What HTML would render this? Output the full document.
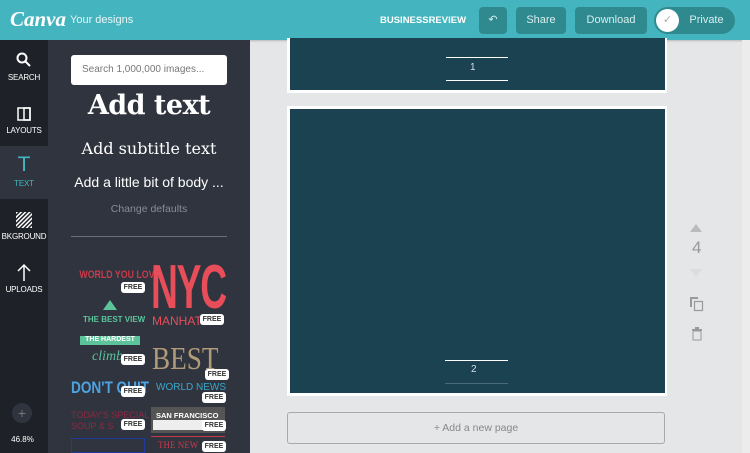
<!DOCTYPE html>
<html><head><style>
*{margin:0;padding:0;box-sizing:border-box}
body{width:750px;height:453px;overflow:hidden;background:#e5e6e8;font-family:"Liberation Sans",sans-serif;position:relative}
.top{position:absolute;left:0;top:0;width:750px;height:40px;background:#44b5be;box-shadow:0 1px 2px rgba(0,0,0,.2)}
.abs{position:absolute}
.rail{position:absolute;left:0;top:40px;width:48px;height:413px;background:#1e2127}
.ri{position:absolute;left:0;width:48px;height:53px;color:#fff;font-size:8px;text-align:center}
.ri span{position:absolute;left:0;width:48px;top:33px;letter-spacing:-.2px}
.panel{position:absolute;left:48px;top:40px;width:202px;height:413px;background:#30343f;overflow:hidden}
.btn{position:absolute;top:7px;height:27px;background:#2f8a8f;border-radius:4px;color:#d8eeee;font-size:11px;line-height:27px;text-align:center}
.free{position:absolute;background:#fff;color:#333;font-size:7px;font-weight:bold;border-radius:3px;width:24px;height:11px;line-height:11px;text-align:center}
</style></head><body>
<div class="top"></div>
<div class="abs" style="left:10px;top:7px;font-family:'Liberation Serif',serif;font-style:italic;color:#fff;font-size:21px;font-weight:bold">Canva</div>
<div class="abs" style="left:70px;top:14px;color:#e8f6f7;font-size:11px">Your designs</div>
<div class="abs" style="left:380px;top:15px;color:#fff;font-size:9.5px;font-weight:bold">BUSINESSREVIEW</div>
<div class="btn" style="left:479px;width:28px">&#x21b6;</div>
<div class="btn" style="left:516px;width:50px">Share</div>
<div class="btn" style="left:575px;width:72px">Download</div>
<div class="btn" style="left:654px;width:81px;border-radius:14px;padding-left:24px">Private</div>
<div class="abs" style="left:656px;top:9px;width:23px;height:23px;border-radius:50%;background:#fff;color:#aaa;font-size:11px;text-align:center;line-height:23px">✓</div>

<div class="rail">
 <div class="ri" style="top:0"><svg class="abs" style="left:16px;top:12px" width="16" height="16"><circle cx="6" cy="6" r="4.5" stroke="#fff" stroke-width="2" fill="none"/><path d="M9 9l5 5" stroke="#fff" stroke-width="2"/></svg><span>SEARCH</span></div>
 <div class="ri" style="top:53px"><svg class="abs" style="left:17px;top:14px" width="14" height="14"><rect x="1" y="1" width="12" height="12" stroke="#fff" stroke-width="1.5" fill="none"/><rect x="7" y="1" width="6" height="12" fill="none" stroke="#fff" stroke-width="1.5"/></svg><span>LAYOUTS</span></div>
 <div class="ri" style="top:106px;background:#30343f;color:#44b5be"><div class="abs" style="left:0;width:48px;top:7px;font-size:21px;color:#44b5be;font-weight:normal">T</div><span>TEXT</span></div>
 <div class="ri" style="top:159px"><svg class="abs" style="left:16px;top:13px" width="16" height="16"><defs><pattern id="p" width="3" height="3" patternUnits="userSpaceOnUse" patternTransform="rotate(45)"><rect width="1.5" height="3" fill="#fff"/></pattern></defs><rect width="16" height="16" fill="url(#p)"/></svg><span>BKGROUND</span></div>
 <div class="ri" style="top:212px"><svg class="abs" style="left:16px;top:11px" width="16" height="18"><path d="M8 2v16M2 8l6-6 6 6" stroke="#fff" stroke-width="1.5" fill="none"/></svg><span>UPLOADS</span></div>
 <div class="abs" style="left:12px;top:363px;width:20px;height:20px;border-radius:50%;background:#30343f;color:#777;text-align:center;line-height:20px;font-size:14px">+</div>
 <div class="abs" style="left:0;top:395px;width:45px;text-align:center;color:#fff;font-size:8px">46.8%</div>
</div>

<div class="panel">
 <div class="abs" style="left:23px;top:15px;width:156px;height:30px;background:#fff;border-radius:3px;color:#777;font-size:10px;line-height:30px;padding-left:11px">Search 1,000,000 images...</div>
 <div class="abs" style="left:0;width:202px;top:50px;text-align:center;color:#fff;font-family:'DejaVu Serif',serif;font-weight:bold;font-size:27px;letter-spacing:-.5px">Add text</div>
 <div class="abs" style="left:0;width:202px;top:99px;text-align:center;color:#fff;font-family:'DejaVu Serif',serif;font-size:16px">Add subtitle text</div>
 <div class="abs" style="left:0;width:202px;top:134px;text-align:center;color:#fff;font-size:14px">Add a little bit of body ...</div>
 <div class="abs" style="left:0;width:202px;top:163px;text-align:center;color:#888c96;font-size:10.5px">Change defaults</div>
 <div class="abs" style="left:23px;top:196px;width:156px;height:1px;background:#6a6e78"></div>
 <div class="abs" style="left:24px;top:229px;width:74px;text-align:center;color:#c83a4a;font-size:11px;font-weight:bold;white-space:nowrap;transform:scaleX(.8)">WORLD YOU LOVE</div>
 <div class="free" style="left:73px;top:242px">FREE</div>
 <div class="abs" style="left:103px;top:217px;color:#e84d5a;font-size:62px;font-weight:bold;transform:scaleX(.6);transform-origin:left;line-height:62px;letter-spacing:-2px">NYC</div>
 <div class="abs" style="left:104px;top:274px;color:#e84d5a;font-size:12px">MANHAT</div>
 <div class="free" style="left:152px;top:274px">FREE</div>
 <div class="abs" style="left:55px;top:260px;width:0;height:0;border-left:7px solid transparent;border-right:7px solid transparent;border-bottom:10px solid #5cc39a"></div>
 <div class="abs" style="left:35px;top:275px;color:#5cc39a;font-size:8px;font-weight:bold">THE BEST VIEW</div>
 <div class="abs" style="left:32px;top:296px;width:60px;height:9px;background:#5cc39a;color:#fff;font-size:7px;text-align:center;font-weight:bold">THE HARDEST</div>
 <div class="abs" style="left:44px;top:309px;color:#5cc39a;font-size:14px;font-style:italic;font-family:'Liberation Serif',serif">climb</div>
 <div class="free" style="left:73px;top:314px">FREE</div>
 <div class="abs" style="left:104px;top:302px;color:#b09a78;font-size:32px;font-family:'Liberation Serif',serif;line-height:32px;transform:scaleX(.85);transform-origin:left">BEST</div>
 <div class="free" style="left:157px;top:329px">FREE</div>
 <div class="abs" style="left:23px;top:338px;color:#4ba3e0;font-size:17px;font-weight:bold;transform:scaleX(.8);transform-origin:left">DON'T QUIT</div>
 <div class="free" style="left:73px;top:346px">FREE</div>
 <div class="abs" style="left:108px;top:342px;color:#3aa6c8;font-size:10px">WORLD NEWS</div>
 <div class="free" style="left:154px;top:352px">FREE</div>
 <div class="abs" style="left:23px;top:370px;color:#8a2a42;font-size:9px;line-height:11px">TODAY'S SPECIAL<br>SOUP &amp; S</div>
 <div class="free" style="left:73px;top:379px">FREE</div>
 <div class="abs" style="left:103px;top:367px;width:74px;height:26px;background:#555;color:#fff;font-size:7.5px;font-weight:bold;padding:4px 5px">SAN FRANCISCO</div>
 <div class="abs" style="left:105px;top:380px;width:70px;height:10px;background:#eee"></div>
 <div class="free" style="left:154px;top:380px">FREE</div>
 <div class="abs" style="left:23px;top:398px;width:74px;height:15px;border:1px solid #1e3a9a"></div>
 <div class="abs" style="left:103px;top:396px;width:74px;height:1px;background:#c83a4a"></div>
 <div class="abs" style="left:110px;top:400px;color:#c83a4a;font-size:9px;font-family:'Liberation Serif',serif">THE NEW</div>
 <div class="free" style="left:154px;top:401px">FREE</div>
</div>

<div class="abs" style="left:287px;top:38px;width:380px;height:55px;background:#fff"></div>
<div class="abs" style="left:290px;top:38px;width:375px;height:52px;background:#1a4250"></div>
<div class="abs" style="left:446px;top:57px;width:62px;height:1px;background:#fff"></div>
<div class="abs" style="left:446px;top:80px;width:62px;height:1px;background:#fff"></div>
<div class="abs" style="left:470px;top:62px;color:#dde;font-size:10px">1</div>

<div class="abs" style="left:287px;top:106px;width:380px;height:290px;background:#fff"></div>
<div class="abs" style="left:290px;top:109px;width:375px;height:284px;background:#1a4250"></div>
<div class="abs" style="left:445px;top:360px;width:63px;height:1px;background:#fff"></div>
<div class="abs" style="left:471px;top:364px;color:#dde;font-size:10px">2</div>
<div class="abs" style="left:445px;top:383px;width:63px;height:1px;background:#4a6a78"></div>

<div class="abs" style="left:287px;top:412px;width:378px;height:32px;border:1px solid #a8a9ad;border-radius:3px;color:#888;font-size:10.5px;text-align:center;line-height:30px">+ Add a new page</div>

<div class="abs" style="left:690px;top:224px;width:0;height:0;border-left:6px solid transparent;border-right:6px solid transparent;border-bottom:8px solid #bbb"></div>
<div class="abs" style="left:692px;top:238px;color:#999;font-size:17px">4</div>
<div class="abs" style="left:690px;top:269px;width:0;height:0;border-left:6px solid transparent;border-right:6px solid transparent;border-top:8px solid #ddd"></div>
<svg class="abs" style="left:689px;top:296px" width="16" height="16"><path d="M2 11V2h7" stroke="#999" stroke-width="2" fill="none"/><rect x="5.5" y="5.5" width="8" height="9" stroke="#999" stroke-width="1.2" fill="none"/></svg>
<svg class="abs" style="left:691px;top:326px" width="12" height="16"><rect x="1" y="3" width="10" height="1.5" fill="#999"/><rect x="4" y="1" width="4" height="2" fill="#999"/><rect x="2" y="5" width="8" height="9" stroke="#999" fill="none"/></svg>
<div class="abs" style="left:742px;top:40px;width:8px;height:413px;background:#ececec"></div>
</body></html>
